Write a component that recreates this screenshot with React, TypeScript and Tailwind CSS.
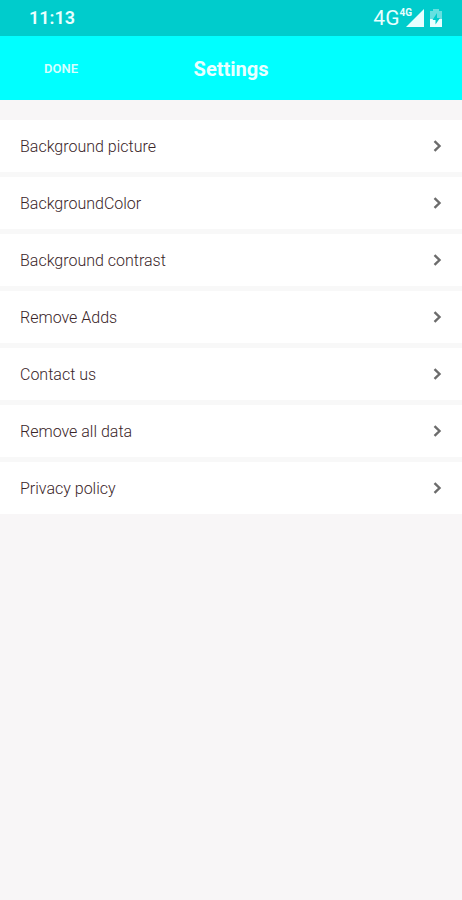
import React from 'react';

const items = [
  'Background picture',
  'BackgroundColor',
  'Background contrast',
  'Remove Adds',
  'Contact us',
  'Remove all data',
  'Privacy policy',
];

function StatusBar() {
  return (
    <div className="flex h-9 items-center justify-between bg-[#00cccc] pl-[29px] pr-5 text-[#e8ffff]">
      <span className="text-lg font-semibold">11:13</span>
      <div className="flex items-center">
        <span className="text-[21px] leading-5">4G</span>
        <span className="-mr-1.5 self-start text-[10px] font-bold leading-[10px]">4G</span>
        <svg className="h-[18px] w-[18px]" viewBox="0 0 18 18" fill="currentColor" aria-hidden="true">
          <path d="M0 18L18 0v18z" />
        </svg>
        <svg className="ml-1.5 h-[18px] w-3" viewBox="0 0 12 18" aria-hidden="true">
          <path d="M0 2h3V0h6v2h3v8H0z" fill="#66e0e0" />
          <path d="M0 10h12v8H0z" fill="currentColor" />
          <path d="M7 4L2.500 11H5.500v4.500L10 9H7z" fill="#00cccc" />
        </svg>
      </div>
    </div>
  );
}

function Header() {
  return (
    <header className="grid h-16 grid-cols-[1fr_auto_1fr] items-center bg-[#00ffff] pt-0.5">
      <button className="ml-11 justify-self-start text-[13px] font-semibold text-[#d5ffff]">DONE</button>
      <h1 className="text-xl font-bold text-[#eaffff]">Settings</h1>
    </header>
  );
}

export default function App() {
  return (
    <div className="min-h-screen bg-[#f8f6f7] font-[Roboto,sans-serif]">
      <StatusBar />
      <Header />
      <main className="pt-5">
        <ul className="flex flex-col gap-[5px] bg-[#f8f8f8]">
          {items.map((item) => (
            <li key={item}>
              <button className="flex h-[52px] w-full items-center justify-between bg-white px-5 text-left text-base font-light text-[#3a2529]">
                <span className="pt-px">{item}</span>
                <svg className="h-3 w-[9px]" viewBox="0 0 9 12" fill="none" stroke="#6c6c6c" strokeWidth="2.400" aria-hidden="true">
                  <path d="M1.500 1.200L6.500 6L1.500 10.800" />
                </svg>
              </button>
            </li>
          ))}
        </ul>
      </main>
    </div>
  );
}
